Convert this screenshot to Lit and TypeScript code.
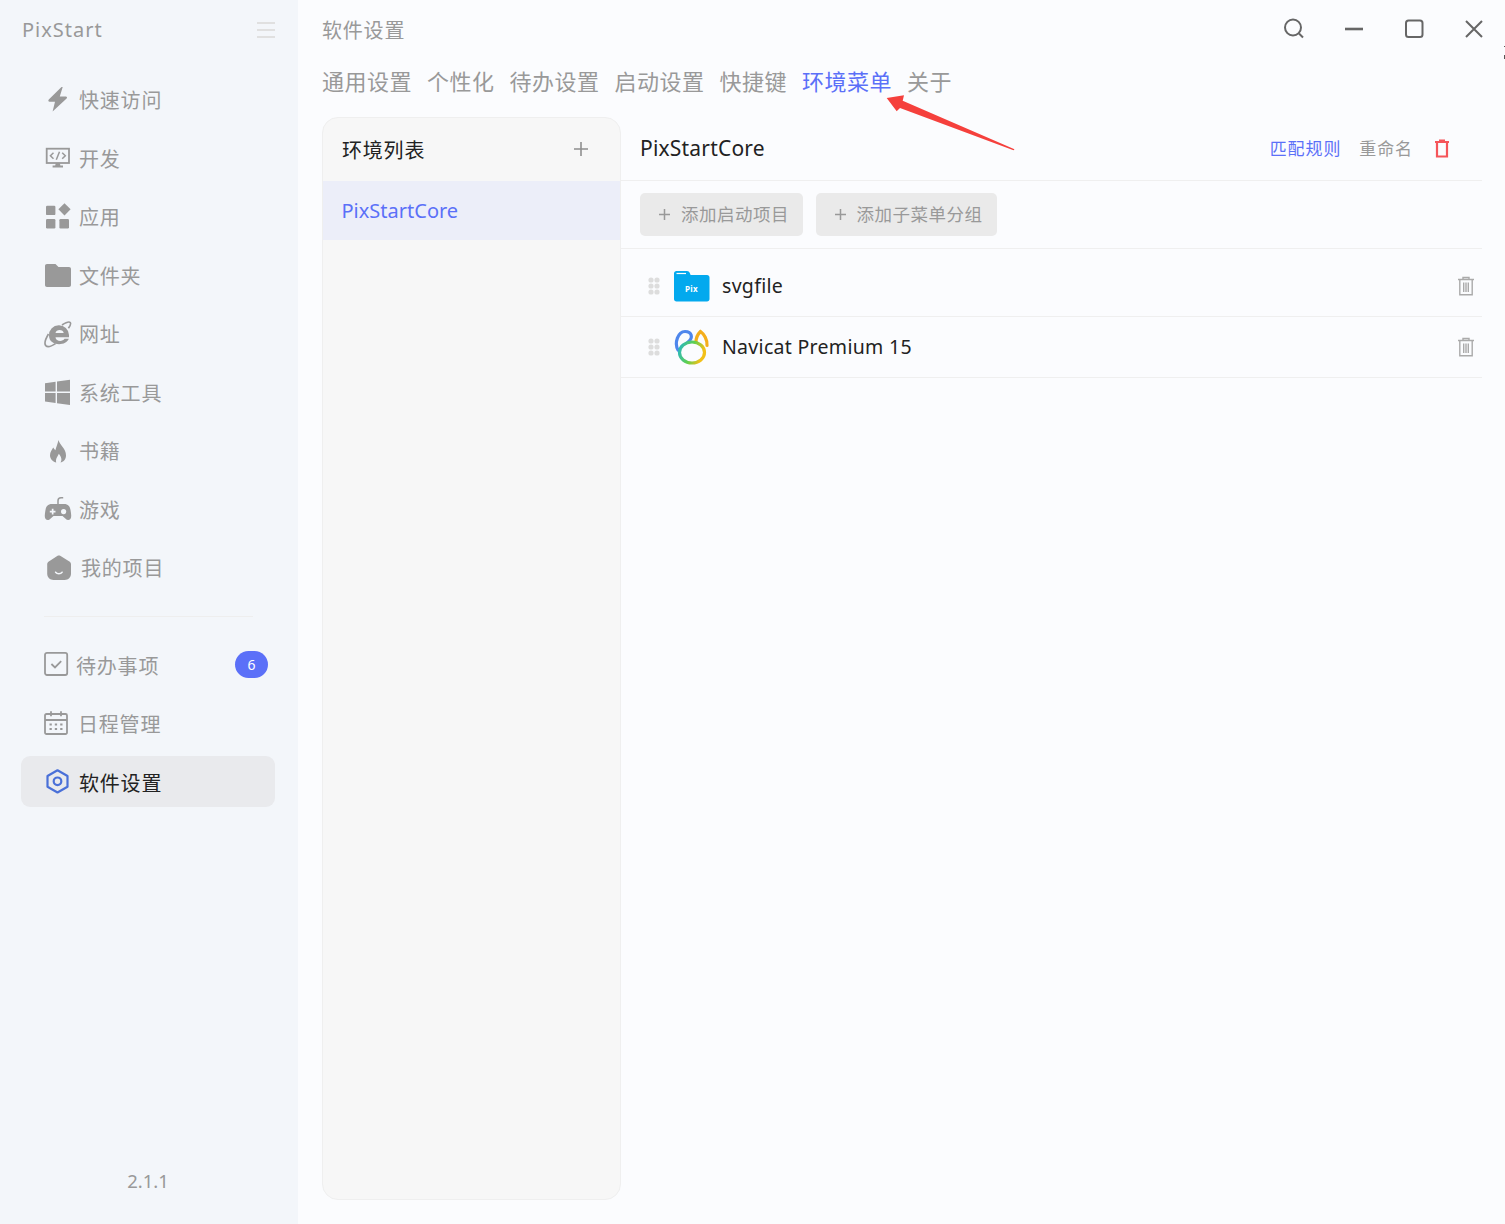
import { LitElement, html, css, svg } from "lit";
import { customElement } from "lit/decorators.js";

// nav icons are drawn in a 28x28 box
const navIcons: Record<string, unknown> = {
  bolt: svg`<path d="M17.500 1 4.800 13.600c-.9.9-.4 2.200.8 2.200H11l-2.400 9.700 14-13c.9-.9.4-2-.8-2h-6l2.900-9.500z"/>`,
  monitor: svg`<rect x="2.700" y="3.700" width="22.300" height="14.300" fill="none" stroke="currentColor" stroke-width="1.800"/>
    <path d="M9.500 7.800 6.400 10.800l3.100 3M18.200 7.800l3.100 3-3.100 3M15.500 6.800l-3.200 8" fill="none" stroke="currentColor" stroke-width="1.500"/>
    <path d="M11.800 18h4l.6 2.600h2.600v2H8.600v-2h2.600z"/>`,
  apps: svg`<rect x="2" y="2.700" width="9.400" height="9.400" rx="1.200"/><rect x="2" y="16" width="9.400" height="9.400" rx="1.200"/><rect x="15.400" y="16" width="9.600" height="9.400" rx="1.200"/>
    <path d="M20.500 .3 26.600 6.300 20.500 12.400 14.400 6.300z"/>`,
  folder: svg`<path d="M1 4c0-1.200.8-2 2-2h8.500l3 3H25c1.200 0 2 .8 2 2v16c0 1.200-.8 2-2 2H3c-1.200 0-2-.8-2-2z"/>`,
  ie: svg`<path d="M5 15.500a10 10 0 0 1 20-.6v2.300H11.500c.3 4.300 7 5 9 1.600h4.300C22 26.500 5 26.500 5 15.500zm6.500-2.400h8.200c-.3-4.300-7.800-4.300-8.200 0z"/>
    <path d="M18 5c4-2.500 7.200-3.500 8.200-2.500 1 1-.2 3.500-1.800 5.800M4.500 14C1.500 19 .2 23.800 1.800 25.600c1.600 1.700 6 .4 9.700-2" fill="none" stroke="currentColor" stroke-width="1.700"/>`,
  windows: svg`<path d="M1 4.200 11.600 2.700V12.500H1zM13 2.500 26 .8V12.500H13zM1 14H11.600V23.900L1 22.400zM13 14H26V26L13 24.200z"/>`,
  flame: svg`<path d="M14.500 3c1 5 7.500 8.200 7.500 15.500 0 4.200-3 6.700-5.500 7 1.800-2.800.8-6-1.800-8.800-.5 2.500-3.500 4.600-2.500 8.800-2.800-.6-6.200-3-6.200-7.200 0-3.500 2-5.300 3.200-7.800.7 1.200 1.300 2 2.200 2.700C12.200 10 13.800 6.500 14.500 3z"/>`,
  game: svg`<path d="M8 8h12c4.500 0 6 2.800 6.600 6.500.5 3.300 1.200 6.500-.2 8.500-1.200 1.500-3.500 1.300-4.800-.2L18.500 20h-9l-3.100 2.800c-1.300 1.500-3.600 1.700-4.800.2-1.400-2-.7-5.200-.2-8.500C2 10.800 3.500 8 8 8z"/>
    <path d="M14 8V4.800c0-2 1.200-3 3-3h2.200" fill="none" stroke="currentColor" stroke-width="1.500"/>
    <path d="M7.800 12.800h1.700v2h2v1.700h-2v2H7.800v-2h-2v-1.700h2z" fill="#f3f6fa"/><circle cx="19.600" cy="15.600" r="2.600" fill="#f3f6fa"/>`,
  project: svg`<path d="M13.600 1.800c.8-.5 1.800-.5 2.600 0l9.200 5.700c1 .6 1.600 1.600 1.600 2.800v9.500c0 3.400-2.800 6.200-6.200 6.200H9.500C6 26 3.200 23.200 3.200 19.800v-9.500c0-1.200.6-2.200 1.600-2.800z"/>
    <path d="M11.600 18.200c1.500 2 5 2 6.500 0" fill="none" stroke="#f3f6fa" stroke-width="1.500" stroke-linecap="round"/>`,
  todo: svg`<rect x="1" y="2.800" width="22.200" height="22.200" rx="2" fill="none" stroke="currentColor" stroke-width="1.800"/>
    <path d="M7.400 14l3.600 3.400 6.200-6.200" fill="none" stroke="currentColor" stroke-width="1.800"/>`,
  calendar: svg`<path d="M2.500 5h19a1.500 1.500 0 0 1 1.500 1.500V23.500a1.500 1.500 0 0 1-1.500 1.500H2.500A1.500 1.500 0 0 1 1 23.500V6.500A1.500 1.500 0 0 1 2.500 5zM1 11h22M7 2.200v5M17 2.200v5" fill="none" stroke="currentColor" stroke-width="1.800"/>
    <path d="M5.500 14.500h2.300v2H5.500zM10.800 14.500h2.300v2h-2.300zM16.200 14.500h2.300v2h-2.300zM5.500 19h2.300v2H5.500zM10.800 19h2.300v2h-2.300zM16.200 19h2.300v2h-2.300z"/>`,
  settings: svg`<path d="M13.500 3.300l10 5.700v10.800l-10 5.700-10-5.700V9z" fill="none" stroke="currentColor" stroke-width="2.200" stroke-linejoin="round"/>
    <circle cx="13.500" cy="14.300" r="3.800" fill="none" stroke="currentColor" stroke-width="2.200"/>`,
};

const topItems = [
  { icon: "bolt", label: "快速访问", box: 35 },
  { icon: "monitor", label: "开发", box: 35 },
  { icon: "apps", label: "应用", box: 35 },
  { icon: "folder", label: "文件夹", box: 35 },
  { icon: "ie", label: "网址", box: 35 },
  { icon: "windows", label: "系统工具", box: 35 },
  { icon: "flame", label: "书籍", box: 35 },
  { icon: "game", label: "游戏", box: 35 },
  { icon: "project", label: "我的项目", box: 37 },
];

const tabs = ["通用设置", "个性化", "待办设置", "启动设置", "快捷键", "环境菜单", "关于"];

@customElement("app-root")
export class AppRoot extends LitElement {
  static styles = css`
    :host {
      display: block;
      height: 1224px;
      overflow: hidden;
      font-family: "Noto Sans", "Noto Sans CJK SC", sans-serif;
      background: #fbfcfe;
      color: #999;
    }
    .app { position: relative; display: flex; height: 1224px; }

    .sidebar {
      width: 298px;
      flex: none;
      box-sizing: border-box;
      background: #f3f6fa;
      padding: 0 23px 0 21px;
      display: flex;
      flex-direction: column;
    }
    .brand {
      height: 60px;
      display: flex;
      align-items: center;
      justify-content: space-between;
      font-size: 20px;
      letter-spacing: 1px;
      color: #999;
      padding-left: 1px;
      margin-bottom: 14.500px;
    }
    .brand span { padding-bottom: 2px; }
    .burger { color: #e0e0e0; margin-right: -1px; display: block; }
    .nav { display: flex; flex-direction: column; gap: 7.500px; }
    .item {
      height: 51px;
      flex: none;
      display: flex;
      align-items: center;
      padding-left: 23px;
      border-radius: 9px;
      font-size: 20px;
      letter-spacing: 0.800px;
      color: #999;
      box-sizing: border-box;
    }
    .item svg { width: 28px; height: 28px; fill: currentColor; display: block; }
    .icon-box { flex: none; display: block; }
    .nav.top .label { padding-bottom: 1px; }
    .nav.bottom .label { padding-top: 2px; }
    .item.active { background: #e9eaed; color: #222; }
    .item.active svg { color: #4a70d8; }
    .badge {
      margin-left: auto;
      margin-right: 7px;
      width: 33px;
      height: 27px;
      border-radius: 14px;
      background: #5b70f8;
      color: #fff;
      font-size: 14px;
      letter-spacing: 0;
      display: flex;
      align-items: center;
      justify-content: center;
    }
    .divider { height: 1px; background: #eeeeee; margin: 22px 22px 22px 23px; }
    .version {
      margin-top: auto;
      height: 30px;
      margin-bottom: 28px;
      text-align: center;
      font-size: 18.500px;
      line-height: 30px;
    }

    .main {
      flex: 1;
      min-width: 0;
      box-sizing: border-box;
      padding: 0 23px 24px 24px;
      display: flex;
      flex-direction: column;
    }
    .titlebar { height: 60px; flex: none; display: flex; align-items: center; justify-content: space-between; font-size: 20px; letter-spacing: 0.800px; }
    .titlebar > span { padding-bottom: 2px; }
    .winbtns { display: flex; gap: 36px; margin: -2px -4px 0 0; }
    .winbtns svg { width: 24px; height: 24px; display: block; fill: none; stroke: #666; stroke-width: 2; }
    .tabs { height: 44px; flex: none; box-sizing: border-box; padding-bottom: 4px; display: flex; align-items: center; gap: 15px; font-size: 22px; letter-spacing: 0.500px; margin-bottom: 13px; color: #999; }
    .tabs .on { color: #5b70f8; }
    .content { flex: 1; min-height: 0; display: flex; }

    .envs {
      width: 299px;
      flex: none;
      box-sizing: border-box;
      background: #f7f7f7;
      border: 1px solid #efefef;
      border-radius: 16px;
      display: flex;
      flex-direction: column;
      overflow: hidden;
    }
    .envs-head { height: 62px; flex: none; display: flex; align-items: center; justify-content: space-between; padding: 0 30px 0 19px; box-sizing: border-box; font-size: 20px; letter-spacing: 0.800px; color: #222; }
    .envs-head svg { width: 18px; height: 18px; stroke: #8f8f8f; stroke-width: 1.600; fill: none; display: block; }
    .env { height: 59px; flex: none; background: #eceef9; color: #5b70f8; display: flex; align-items: center; padding-left: 18.500px; font-size: 20px; margin-top: 1px; }

    .detail { flex: 1; min-width: 0; display: flex; flex-direction: column; }
    .detail-head { height: 64px; flex: none; box-sizing: border-box; border-bottom: 1px solid #efefef; display: flex; align-items: center; padding: 0 32px 2px 19px; font-size: 21px; letter-spacing: 0.200px; color: #222; }
    .detail-head .spacer { flex: 1; }
    .link { font-size: 17px; letter-spacing: 0.900px; color: #999; margin-left: 18px; }
    .link.blue { color: #5b70f8; }
    .del { margin-left: 21px; width: 16px; height: 20px; display: block; fill: none; stroke: #f5555a; stroke-width: 2.200; }
    .toolbar { height: 68px; flex: none; box-sizing: border-box; border-bottom: 1px solid #efefef; display: flex; align-items: flex-start; gap: 12.500px; padding: 12px 0 0 19px; }
    .btn { height: 43px; box-sizing: border-box; border-radius: 5px; background: #eaeaea; color: #999; display: flex; align-items: center; padding: 0 14px 0 18px; font-size: 17.500px; letter-spacing: 0.500px; gap: 10px; }
    .btn span { padding-bottom: 2px; }
    .btn svg { width: 13px; height: 13px; stroke: #999; stroke-width: 1.500; fill: none; display: block; }
    .row { flex: none; box-sizing: border-box; border-bottom: 1px solid #efefef; display: flex; align-items: center; padding: 0 8px 0 27px; font-size: 19.500px; letter-spacing: 0.300px; color: #222; }
    .row.a { height: 68px; padding-top: 6px; }
    .row.b { height: 61px; }
    .row.b .name { padding-bottom: 2px; }
    .grip { width: 12px; height: 18px; display: block; fill: #dddddd; margin-right: 13px; }
    .app-icon { width: 37px; height: 36px; display: block; margin-right: 12px; flex: none; }
    .row .name { flex: 1; }
    .bin { width: 18px; height: 20px; display: block; fill: none; stroke: #aaa; stroke-width: 1.400; margin-right: -1px; }

    .arrow { position: absolute; left: 880px; top: 90px; width: 140px; height: 70px; display: block; }
    .tick { position: absolute; right: 0; width: 1px; background: #555; }
    .tick.one { top: 46px; height: 1px; }
    .tick.two { top: 55px; height: 4px; }
  `;

  private renderNavItem(icon: string, label: string, box: number) {
    return html`<div class="item">
      <span class="icon-box" style="width:${box}px"><svg viewBox="0 0 28 28">${navIcons[icon]}</svg></span>
      <span class="label">${label}</span>
    </div>`;
  }

  private renderBin() {
    return html`<svg class="bin" viewBox="0 0 18 20">
      <path d="M1 3.500h16M6 3.500V1.500h6v2M2.800 3.500V18.800h12.400V3.500M6.700 6.500v9.500M9 6.500v9.500M11.300 6.500v9.500"/>
    </svg>`;
  }

  private renderGrip() {
    return html`<svg class="grip" viewBox="0 0 12 18">
      <circle cx="3" cy="3" r="2.600"/><circle cx="9" cy="3" r="2.600"/>
      <circle cx="3" cy="9" r="2.600"/><circle cx="9" cy="9" r="2.600"/>
      <circle cx="3" cy="15" r="2.600"/><circle cx="9" cy="15" r="2.600"/>
    </svg>`;
  }

  render() {
    return html`
      <div class="app">
        <aside class="sidebar">
          <div class="brand">
            <span>PixStart</span>
            <svg class="burger" width="20" height="18" viewBox="0 0 20 18" fill="none" stroke="currentColor" stroke-width="1.800">
              <path d="M1 2h18M1 9h18M1 16h18" />
            </svg>
          </div>
          <div class="nav top">
            ${topItems.map((i) => this.renderNavItem(i.icon, i.label, i.box))}
          </div>
          <div class="divider"></div>
          <div class="nav bottom">
            <div class="item">
              <span class="icon-box" style="width:32px"><svg viewBox="0 0 28 28">${navIcons.todo}</svg></span>
              <span class="label">待办事项</span>
              <span class="badge">6</span>
            </div>
            ${this.renderNavItem("calendar", "日程管理", 34)}
            <div class="item active">
              <span class="icon-box" style="width:35px"><svg viewBox="0 0 28 28">${navIcons.settings}</svg></span>
              <span class="label">软件设置</span>
            </div>
          </div>
          <div class="version">2.1.1</div>
        </aside>

        <main class="main">
          <div class="titlebar">
            <span>软件设置</span>
            <div class="winbtns">
              <svg viewBox="0 0 24 24"><circle cx="11" cy="10.500" r="8"/><path d="M17 16.500l4 4"/></svg>
              <svg viewBox="0 0 24 24"><path d="M3 12h18" stroke-width="2.600"/></svg>
              <svg viewBox="0 0 24 24"><rect x="4" y="3.500" width="16.500" height="16.500" rx="2.500"/></svg>
              <svg viewBox="0 0 24 24"><path d="M4 4l16 16M20 4 4 20"/></svg>
            </div>
          </div>
          <div class="tabs">
            ${tabs.map((t) => html`<span class=${t === "环境菜单" ? "on" : ""}>${t}</span>`)}
          </div>
          <div class="content">
            <section class="envs">
              <div class="envs-head">
                <span>环境列表</span>
                <svg viewBox="0 0 18 18"><path d="M9 2v14M2 9h14" /></svg>
              </div>
              <div class="env">PixStartCore</div>
            </section>
            <section class="detail">
              <div class="detail-head">
                <span>PixStartCore</span>
                <span class="spacer"></span>
                <span class="link blue">匹配规则</span>
                <span class="link">重命名</span>
                <svg class="del" viewBox="0 0 16 20"><path d="M1 4h14M5 2.500h6M3 4v14.500h10V4" /></svg>
              </div>
              <div class="toolbar">
                <div class="btn">
                  <svg viewBox="0 0 13 13"><path d="M6.500 1v11M1 6.500h11" /></svg>
                  <span>添加启动项目</span>
                </div>
                <div class="btn">
                  <svg viewBox="0 0 13 13"><path d="M6.500 1v11M1 6.500h11" /></svg>
                  <span>添加子菜单分组</span>
                </div>
              </div>
              <div class="row a">
                ${this.renderGrip()}
                <svg class="app-icon" viewBox="0 0 37 36">
                  <path d="M1 5.500C1 4 2 3 3.500 3H14c1.300 0 2.300.7 2.800 2l.8 2H34c1.500 0 2.500 1 2.500 2.500V31c0 1.500-1 2.500-2.500 2.500H3.500C2 33.500 1 32.500 1 31z" fill="#03a9ee" />
                  <path d="M3.500 5.500H13" stroke="#fff" stroke-width="1.200" />
                  <text x="18.500" y="24" text-anchor="middle" font-size="8" font-weight="700" fill="#fff" font-family="Noto Sans">Pix</text>
                </svg>
                <span class="name">svgfile</span>
                ${this.renderBin()}
              </div>
              <div class="row b">
                ${this.renderGrip()}
                <svg class="app-icon" viewBox="0 0 37 36">
                  <defs>
                    <linearGradient id="nv" x1="0" y1="0" x2="1" y2="0.300">
                      <stop offset="0" stop-color="#27b6c6" /><stop offset="0.550" stop-color="#5fd04e" /><stop offset="1" stop-color="#f2c019" />
                    </linearGradient>
                  </defs>
                  <path d="M5 21C1 14 5 2.500 12 2.500 19 2.500 20.500 9 15 13" fill="none" stroke="#4e86ec" stroke-width="3.200" stroke-linecap="round" />
                  <path d="M23 13c0-4 2-8 4.500-10.500 3.500 2.500 7 8 6.500 14" fill="none" stroke="#f4ae1c" stroke-width="3.200" stroke-linecap="round" />
                  <ellipse cx="19" cy="23.500" rx="12.500" ry="10.500" fill="none" stroke="url(#nv)" stroke-width="3.200" />
                </svg>
                <span class="name">Navicat Premium 15</span>
                ${this.renderBin()}
              </div>
            </section>
          </div>
        </main>

        <span class="tick one"></span>
        <span class="tick two"></span>
        <!-- annotation arrow drawn over the screenshot -->
        <svg class="arrow" viewBox="0 0 140 70">
          <path d="M6.700 8 24 5.300 22.700 10.700 134.500 59.300 133.500 60.300 20 18 16.700 21.300z" fill="#f5403c" />
        </svg>
      </div>
    `;
  }
}
